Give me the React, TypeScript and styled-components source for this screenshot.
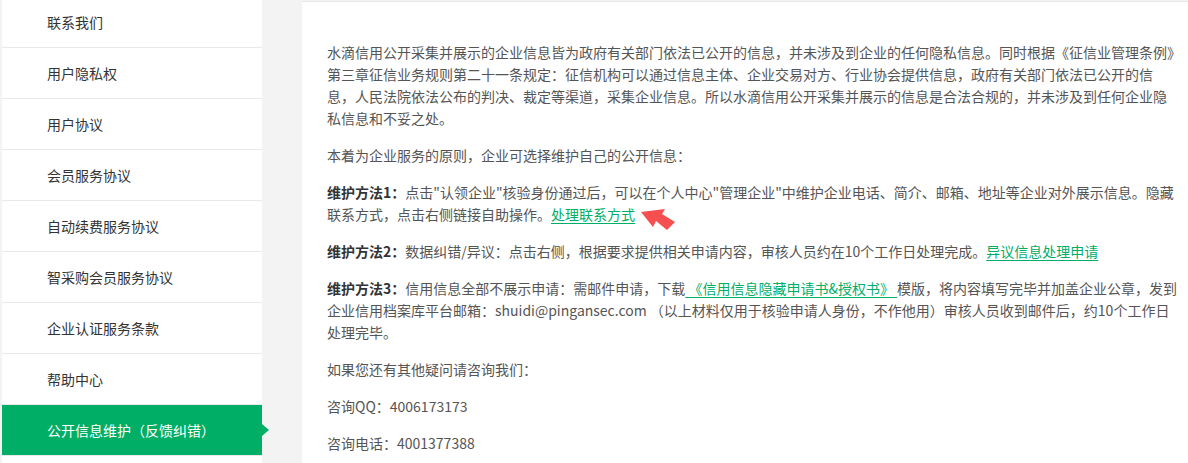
import React from "react";
import styled, { createGlobalStyle } from "styled-components";

const GREEN = "#00ae66";

const Global = createGlobalStyle`
  html, body {
    margin: 0;
    padding: 0;
    background: #f3f3f3;
    overflow: hidden;
  }
  body {
    font-family: "Noto Sans CJK SC", "Noto Sans", sans-serif;
    font-size: 14px;
    -webkit-font-smoothing: antialiased;
  }
`;

const Layout = styled.div`
  display: flex;
  align-items: flex-start;
  gap: 40px;
  padding-left: 2px;
  height: 463px;
`;

const Sidebar = styled.ul`
  list-style: none;
  margin: -3px 0 0;
  padding: 0;
  width: 260px;
  flex: none;
  background: #fff;
  height: 480px;
`;

const NavItem = styled.li<{ $active?: boolean }>`
  position: relative;
  height: 50px;
  display: flex;
  align-items: center;
  padding-left: 45px;
  border-bottom: 1px solid #e8e8e8;
  font-size: 14px;
  color: ${(p) => (p.$active ? "#fff" : "#333")};
  background: ${(p) => (p.$active ? GREEN : "#fff")};
  ${(p) =>
    p.$active &&
    `
    &::after {
      content: "";
      position: absolute;
      right: -7px;
      top: 50%;
      margin-top: -6px;
      border-style: solid;
      border-width: 6px 0 6px 7px;
      border-color: transparent transparent transparent ${GREEN};
    }
  `}
`;

const Main = styled.main`
  flex: 1;
  min-width: 0;
  margin-top: 1px;
  background: #fff;
  border-top: 1px solid #e8e8e8;
  padding: 39px 7px 0 25px;
  height: 470px;
  box-sizing: border-box;
`;

const Para = styled.p`
  margin: 0 0 15px;
  line-height: 22px;
  color: #555;
  font-size: 14px;
  text-spacing-trim: space-all;
`;

const Label = styled.b`
  color: #333;
  font-weight: 700;
`;

const Link = styled.a`
  color: ${GREEN};
  text-decoration: underline;
  text-underline-offset: 3px;
  text-decoration-thickness: 1px;
  white-space: pre;
`;

const Annotated = styled.span`
  position: relative;
`;

const Pointer = styled.svg`
  position: absolute;
  left: calc(100% + 6px);
  top: 1px;
  width: 36px;
  height: 28px;
  pointer-events: none;
`;

const navItems = [
  "联系我们",
  "用户隐私权",
  "用户协议",
  "会员服务协议",
  "自动续费服务协议",
  "智采购会员服务协议",
  "企业认证服务条款",
  "帮助中心",
  "公开信息维护（反馈纠错）",
];

export default function App() {
  return (
    <>
      <Global />
      <Layout>
        <Sidebar>
          {navItems.map((t, i) => (
            <NavItem key={t} $active={i === navItems.length - 1}>
              {t}
            </NavItem>
          ))}
        </Sidebar>
        <Main>
          <Para>
            水滴信用公开采集并展示的企业信息皆为政府有关部门依法已公开的信息，并未涉及到企业的任何隐私信息。同时根据《征信业管理条例》第三章征信业务规则第二十一条规定：征信机构可以通过信息主体、企业交易对方、行业协会提供信息，政府有关部门依法已公开的信
            <br />
            息，人民法院依法公布的判决、裁定等渠道，采集企业信息。所以水滴信用公开采集并展示的信息是合法合规的，并未涉及到任何企业隐
            <br />
            私信息和不妥之处。
          </Para>
          <Para>本着为企业服务的原则，企业可选择维护自己的公开信息：</Para>
          <Para>
            <Label>维护方法1：</Label>点击"认领企业"核验身份通过后，可以在个人中心"管理企业"中维护企业电话、简介、邮箱、地址等企业对外展示信息。隐藏联系方式，点击右侧链接自助操作。
            <Annotated>
              <Link>处理联系方式</Link>
              <Pointer viewBox="0 0 36 28">
                <polygon
                  points="0,7 24,4 21,9 34,17 26,25 15,16 12,22"
                  fill="#f64f4f"
                />
              </Pointer>
            </Annotated>
          </Para>
          <Para>
            <Label>维护方法2：</Label>数据纠错/异议：点击右侧，根据要求提供相关申请内容，审核人员约在10个工作日处理完成。
            <Link>异议信息处理申请</Link>
          </Para>
          <Para>
            <Label>维护方法3：</Label>信用信息全部不展示申请：需邮件申请，下载
            <Link> 《信用信息隐藏申请书&amp;授权书》 </Link>
            模版，将内容填写完毕并加盖企业公章，发到企业信用档案库平台邮箱：shuidi@pingansec.com （以上材料仅用于核验申请人身份，不作他用）审核人员收到邮件后，约10个工作日处理完毕。
          </Para>
          <Para>如果您还有其他疑问请咨询我们：</Para>
          <Para>咨询QQ：4006173173</Para>
          <Para>咨询电话：4001377388</Para>
        </Main>
      </Layout>
    </>
  );
}
